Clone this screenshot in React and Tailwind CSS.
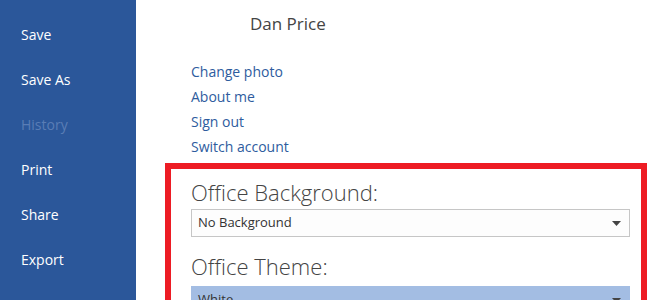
import { useState } from 'react'

const NAV = [
  { label: 'Save' },
  { label: 'Save As' },
  { label: 'History', disabled: true },
  { label: 'Print' },
  { label: 'Share' },
  { label: 'Export' },
]

const LINKS = ['Change photo', 'About me', 'Sign out', 'Switch account']

const font = { fontFamily: '"Open Sans", "Noto Sans", sans-serif' }

function Caret() {
  return (
    <svg width="9" height="5" viewBox="0 0 9 5" className="shrink-0">
      <path d="M0 0 H9 L4.5 5 Z" fill="#444444" />
    </svg>
  )
}

function Dropdown({ value, active }) {
  return (
    <div
      className={`flex h-[28px] items-center justify-between border pl-[6px] pr-[8px] text-[13px] ${
        active ? 'border-[#a3bde3] bg-[#a3bde3] text-[#333]' : 'border-[#c6c6c6] bg-[#fdfdfd] text-[#333]'
      }`}
    >
      <span>{value}</span>
      <Caret />
    </div>
  )
}

export default function App() {
  const [selected] = useState('No Background')

  return (
    <div className="flex h-[300px] w-[660px] overflow-hidden bg-white" style={font}>
      <nav className="flex w-[136px] shrink-0 flex-col bg-[#2b579a] pt-[12px]">
        {NAV.map((n) => (
          <div
            key={n.label}
            className={`flex h-[45px] items-center pl-[21px] text-[14px] ${
              n.disabled ? 'text-[#5a7db5]' : 'text-white'
            }`}
          >
            {n.label}
          </div>
        ))}
      </nav>

      <main className="flex-1 pl-[29px] pr-[13px]">
        <div className="ml-[85px] pt-[11px] text-[17px] leading-[26px] text-[#444]">Dan Price</div>

        <ul className="mt-[22px] ml-[26px] flex flex-col">
          {LINKS.map((l) => (
            <li key={l} className="h-[25px] text-[14px] leading-[25px] text-[#2e5c9e]">
              {l}
            </li>
          ))}
        </ul>

        <section className="mt-[4px] h-[200px] border-[6px] border-b-0 border-[#ed1c24] pl-[20px] pr-[11px] pt-[9px]">
          <h2 className="text-[22px] font-light leading-[28px] text-[#444]">Office Background:</h2>
          <div className="mt-[3px]">
            <Dropdown value={selected} />
          </div>
          <h2 className="mt-[15px] text-[22px] font-light leading-[28px] text-[#444]">Office Theme:</h2>
          <div className="mt-[6px]">
            <Dropdown value="White" active />
          </div>
        </section>
      </main>
    </div>
  )
}
